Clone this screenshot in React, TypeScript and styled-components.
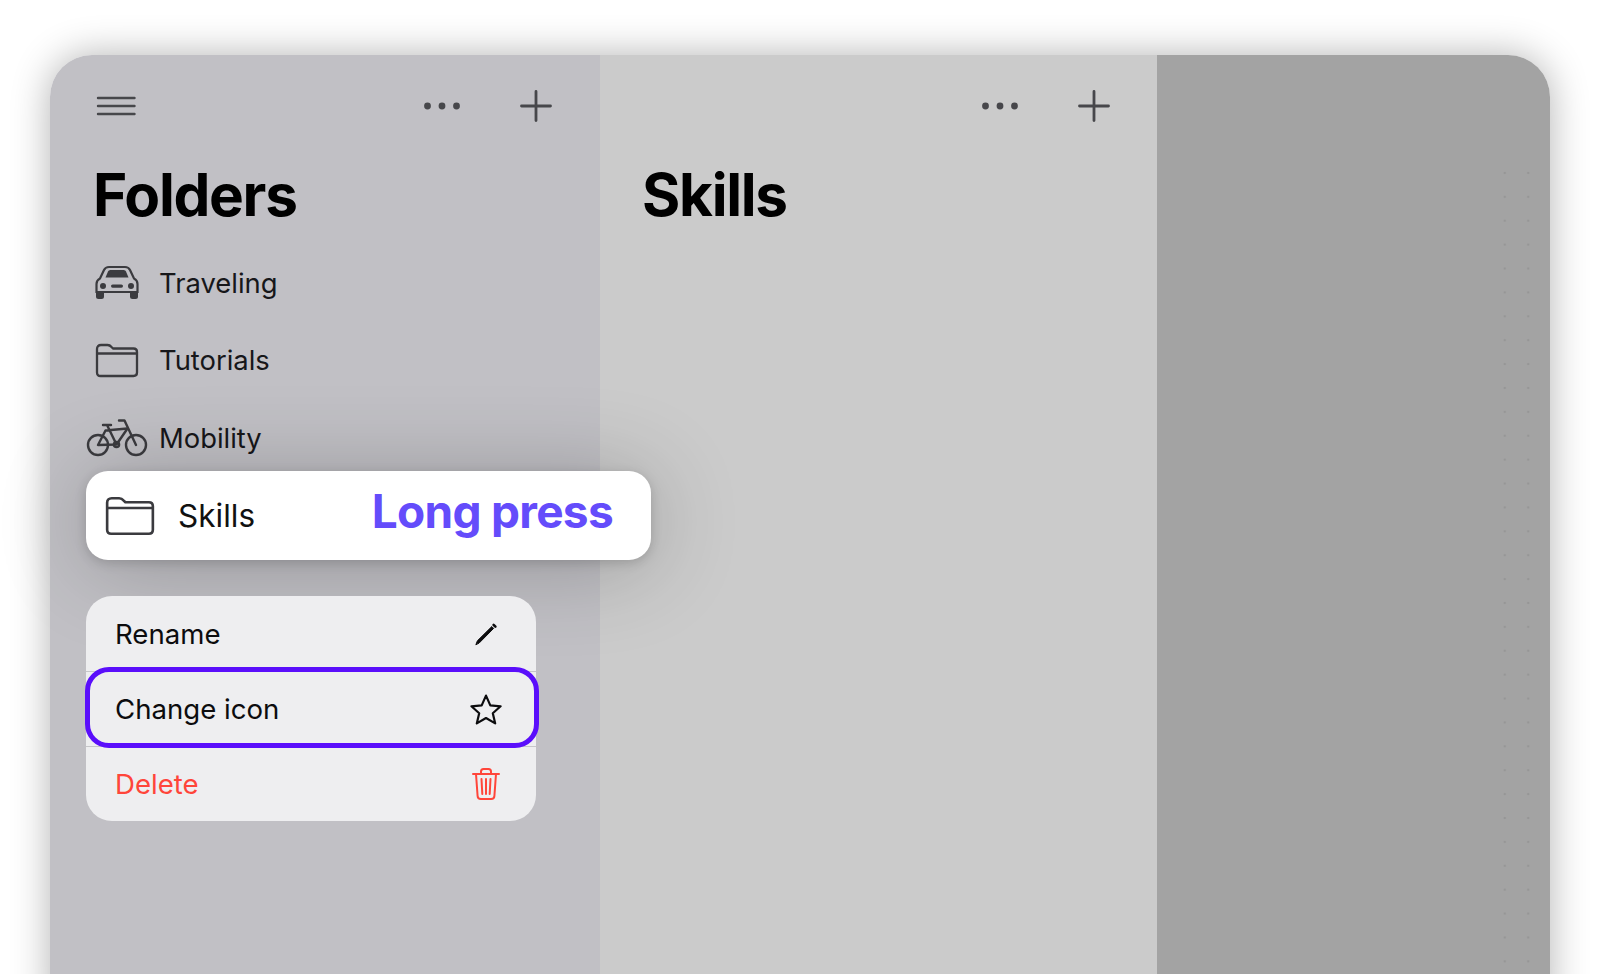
import React from "react";
import styled, { createGlobalStyle } from "styled-components";

const Global = createGlobalStyle`
  html, body { margin: 0; padding: 0; width: 1600px; height: 974px; overflow: hidden; background: #fff; }
  body { font-family: Inter, "Liberation Sans", sans-serif; -webkit-font-smoothing: antialiased; }
`;

const Page = styled.div`
  width: 1600px;
  height: 974px;
  padding: 55px 50px 0;
  box-sizing: border-box;
  overflow: hidden;
`;

const Device = styled.div`
  position: relative;
  display: flex;
  height: 980px;
  border-radius: 42px;
  box-shadow: 0 0 38px rgba(0, 0, 0, 0.3);
`;

const Panel = styled.section<{ $w: number; $bg: string; $corner?: string; $front?: boolean }>`
  position: relative;
  z-index: ${(p) => (p.$front ? 2 : "auto")};
  width: ${(p) => p.$w}px;
  flex: none;
  box-sizing: border-box;
  padding-top: 36px;
  background: ${(p) => p.$bg};
  border-radius: ${(p) => p.$corner || "0"};
`;

const TopBar = styled.div<{ $left: number; $right: number; $between?: boolean }>`
  display: flex;
  align-items: center;
  justify-content: ${(p) => (p.$between ? "space-between" : "flex-end")};
  height: 30px;
  padding: 0 ${(p) => p.$right}px 0 ${(p) => p.$left}px;
`;

const Actions = styled.div`
  display: flex;
  align-items: center;
  gap: 60px;
`;

const Title = styled.h1<{ $left: number }>`
  margin: 39px 0 -1px;
  padding-left: ${(p) => p.$left}px;
  font-size: 58.5px;
  line-height: 70px;
  font-weight: 700;
  letter-spacing: -1.3px;
  color: #000;
`;

const List = styled.div`
  margin-top: 15px;
`;

const FolderRow = styled.div`
  display: flex;
  align-items: center;
  height: 77.5px;
  padding-left: 36px;
`;

const IconSlot = styled.div`
  width: 62px;
  flex: none;
  display: flex;
  justify-content: center;
  margin-right: 11px;
`;

const RowLabel = styled.span`
  font-size: 27.4px;
  color: #17171a;
`;

const PressedCard = styled.div`
  position: relative;
  z-index: 2;
  display: flex;
  align-items: center;
  box-sizing: border-box;
  width: 565px;
  height: 89px;
  margin: -5.5px 0 0 36px;
  padding: 0 38px 0 20px;
  background: #fff;
  border-radius: 22px;
  box-shadow: 0 6px 90px rgba(0, 0, 0, 0.24), 0 3px 12px rgba(0, 0, 0, 0.16);
`;

const CardLabel = styled.span`
  margin-left: 24px;
  font-size: 31.5px;
  color: #111;
`;

const Hint = styled.span`
  margin: 0 0 9px auto;
  font-size: 46px;
  font-weight: 700;
  letter-spacing: -0.7px;
  color: #644cfb;
`;

const Menu = styled.div`
  position: relative;
  z-index: 3;
  margin: 36px 0 0 36px;
  width: 450px;
  border-radius: 26px;
  background: #eeeef0;
`;

const MenuRow = styled.div<{ $danger?: boolean; $rule?: boolean }>`
  display: flex;
  align-items: center;
  justify-content: space-between;
  box-sizing: border-box;
  height: 75px;
  padding: 0 33px 0 29px;
  font-size: 27.6px;
  color: ${(p) => (p.$danger ? "#ff453a" : "#0c0c0e")};
  border-top: ${(p) => (p.$rule ? "1px solid #c6c6c9" : "none")};
`;

const MenuIcon = styled.span`
  display: flex;
  justify-content: center;
  width: 34px;
`;

const Highlight = styled.div`
  position: absolute;
  top: 71px;
  left: -1px;
  width: 454px;
  height: 81px;
  box-sizing: border-box;
  border: 5px solid #5a0efb;
  border-radius: 24px;
  pointer-events: none;
`;

const Dots = styled.div`
  position: absolute;
  top: 106px;
  left: 336px;
  width: 47px;
  bottom: 0;
  background-image: radial-gradient(circle, rgba(0, 0, 0, 0.08) 1px, transparent 1.6px);
  background-size: 23.5px 23.9px;
`;

const Svg = styled.svg`
  display: block;
  flex: none;
  overflow: visible;
`;

const ink = "#47474b";

const Hamburger = () => (
  <Svg width="39" height="20" viewBox="0 0 39 20" fill="none" stroke={ink} strokeWidth="2.4" strokeLinecap="round">
    <path d="M1 2H37.5M1 10H37.5M1 18H37.5" />
  </Svg>
);

const More = () => (
  <Svg width="36" height="8" viewBox="0 0 36 8" fill={ink}>
    <circle cx="3.5" cy="4" r="3.4" />
    <circle cx="18" cy="4" r="3.4" />
    <circle cx="32.5" cy="4" r="3.4" />
  </Svg>
);

const Plus = () => (
  <Svg width="32" height="32" viewBox="0 0 32 32" fill="none" stroke={ink} strokeWidth="2.8" strokeLinecap="round">
    <path d="M16 1.5V30.5M1.5 16H30.5" />
  </Svg>
);

const Car = () => (
  <Svg width="44" height="34" viewBox="0 0 44 34" fill="none" stroke="#3b3b3f" strokeWidth="2.2">
    <path d="M1.5 26V18C1.5 15 3 13.5 5 12.5L9 4C10 2 11.5 1 14 1H30C32.5 1 34 2 35 4L39 12.5C41 13.5 42.5 15 42.5 18V26Z" />
    <path d="M10.5 11.5L13 5.5C13.5 4.5 14.5 4 16 4H28C29.5 4 30.5 4.5 31 5.5L33.5 11.5Z" fill="#3b3b3f" stroke="none" />
    <g fill="#3b3b3f" stroke="none">
      <circle cx="8" cy="20" r="3" />
      <circle cx="36" cy="20" r="3" />
      <rect x="16" y="18.5" width="12" height="3.2" rx="1.6" />
      <path d="M1 25H9V30.5A2.5 2.5 0 0 1 6.5 33H3.5A2.5 2.5 0 0 1 1 30.5Z" />
      <path d="M35 25H43V30.5A2.5 2.5 0 0 1 40.5 33H37.5A2.5 2.5 0 0 1 35 30.5Z" />
    </g>
  </Svg>
);

const Folder = ({ w = 42, h = 33 }: { w?: number; h?: number }) => (
  <Svg width={w} height={h} viewBox="0 0 42 33" fill="none" stroke="#3b3b3f" strokeWidth={2.3} strokeLinejoin="round">
    <path d="M1 5C1 2.5 2.5 1 5 1H11.5C13.5 1 14.5 1.8 15.5 3L17 4.5H37.5C40 4.5 41 5.8 41 8V28.5C41 30.8 39.8 32 37.5 32H4.5C2.2 32 1 30.8 1 28.5Z" />
    <path d="M1 9.5H41" />
  </Svg>
);

const Bike = () => (
  <Svg width="60" height="37" viewBox="0 0 60 37" fill="none" stroke="#3b3b3f" strokeWidth="2.4" strokeLinecap="round" strokeLinejoin="round">
    <circle cx="11" cy="26" r="10" />
    <circle cx="49" cy="26" r="10" />
    <path d="M32 1.5H37.5L49 26" />
    <path d="M16 6H24M20 6L29.5 25.5L40.5 9.5L18.5 11.5L11 26L29.5 25.5" />
    <circle cx="29.5" cy="25.5" r="2.6" />
  </Svg>
);

const Pencil = () => (
  <Svg width="24" height="24" viewBox="0 0 24 24" fill="none" stroke="#0c0c0e" strokeLinecap="round">
    <path d="M2 22.4L3.4 18.8L17.8 4.6L19.6 6.4L5.4 20.8Z" fill="#0c0c0e" strokeWidth="1" strokeLinejoin="round" />
    <path d="M19.6 2.8L21.4 4.6" strokeWidth="2.6" />
  </Svg>
);

const Star = () => (
  <Svg width="32" height="31" viewBox="0 0 32 31" fill="none" stroke="#0c0c0e" strokeWidth="2.2" strokeLinejoin="round">
    <path d="M16 1.6L20.3 11.4L30.6 12.3L22.8 19.2L25.2 29.4L16 24L6.8 29.4L9.2 19.2L1.4 12.3L11.7 11.4Z" />
  </Svg>
);

const Trash = () => (
  <Svg width="28" height="32" viewBox="0 0 28 32" fill="none" stroke="#ff453a" strokeWidth="2" strokeLinecap="round" strokeLinejoin="round">
    <path d="M1 6H27M9 6V3.5C9 2 10 1 11.5 1H16.5C18 1 19 2 19 3.5V6" />
    <path d="M4 6L5.6 28C5.7 30 7 31 8.8 31H19.2C21 31 22.3 30 22.4 28L24 6" />
    <path d="M9.5 11L10.3 26M14 11V26M18.5 11L17.7 26" />
  </Svg>
);

const folders: [string, React.ReactNode][] = [
  ["Traveling", <Car />],
  ["Tutorials", <Folder />],
  ["Mobility", <Bike />],
];

export default function App() {
  return (
    <Page>
      <Global />
      <Device>
        <Panel $w={550} $bg="#c1c0c5" $corner="42px 0 0 0" $front>
          <TopBar $left={47} $right={48} $between>
            <Hamburger />
            <Actions>
              <More />
              <Plus />
            </Actions>
          </TopBar>
          <Title $left={43}>Folders</Title>
          <List>
            {folders.map(([name, icon]) => (
              <FolderRow key={name}>
                <IconSlot>{icon}</IconSlot>
                <RowLabel>{name}</RowLabel>
              </FolderRow>
            ))}
          </List>
          <PressedCard>
            <Folder w={48} h={38} />
            <CardLabel>Skills</CardLabel>
            <Hint>Long press</Hint>
          </PressedCard>
          <Menu>
            <MenuRow>
              Rename
              <MenuIcon>
                <Pencil />
              </MenuIcon>
            </MenuRow>
            <MenuRow $rule>
              Change icon
              <MenuIcon>
                <Star />
              </MenuIcon>
            </MenuRow>
            <MenuRow $rule $danger>
              Delete
              <MenuIcon>
                <Trash />
              </MenuIcon>
            </MenuRow>
            <Highlight />
          </Menu>
        </Panel>
        <Panel $w={557} $bg="#cbcbcb">
          <TopBar $left={43} $right={47}>
            <Actions>
              <More />
              <Plus />
            </Actions>
          </TopBar>
          <Title $left={42}>Skills</Title>
        </Panel>
        <Panel $w={393} $bg="#a3a3a3" $corner="0 42px 0 0">
          <Dots />
        </Panel>
      </Device>
    </Page>
  );
}
